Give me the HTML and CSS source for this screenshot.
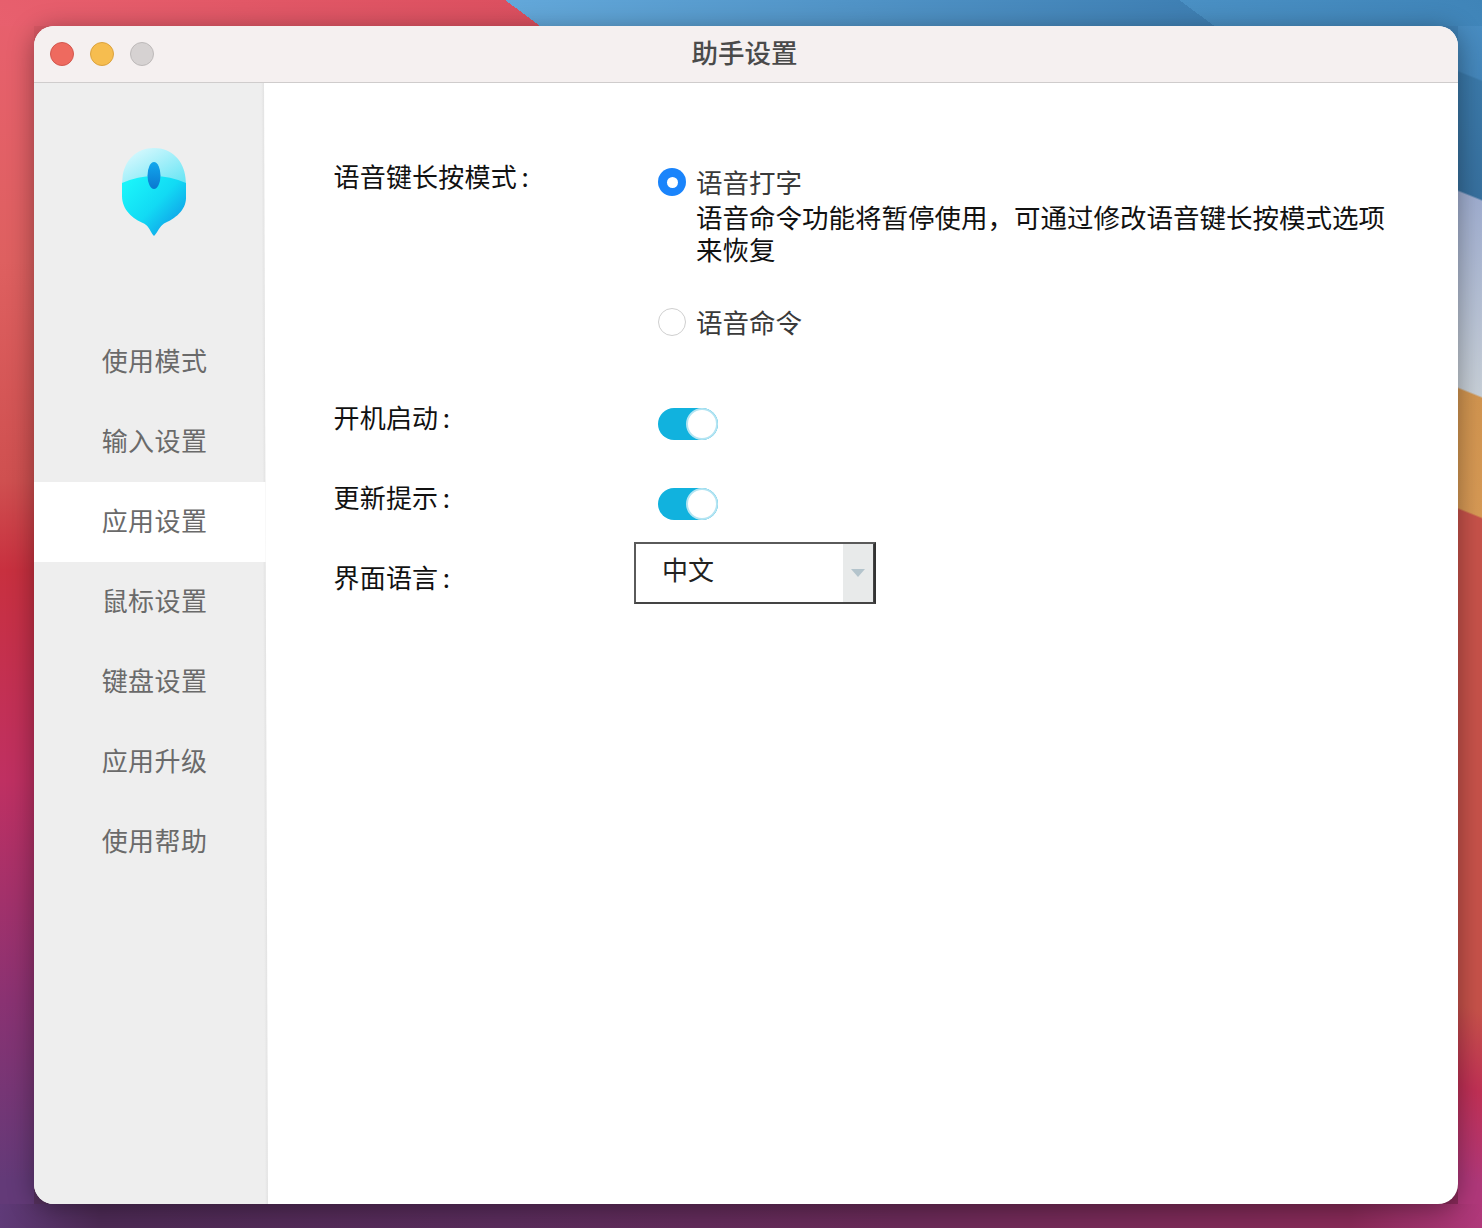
FILE: index.html
```html
<!DOCTYPE html>
<html lang="zh-CN">
<head>
<meta charset="utf-8">
<title>助手设置</title>
<link rel="stylesheet" href="styles.css">
</head>
<body>
<div class="window">
  <header class="titlebar">
    <div class="lights">
      <span class="light light-close"></span>
      <span class="light light-min"></span>
      <span class="light light-max"></span>
    </div>
    <div class="title">助手设置</div>
  </header>
  <div class="content">
    <aside class="sidebar">
      <div class="logo">
        <svg width="64" height="88" viewBox="0 0 64 88">
          <defs>
            <linearGradient id="top" x1="0" y1="0" x2="1" y2="1">
              <stop offset="0" stop-color="#e6fbff"/>
              <stop offset="1" stop-color="#62e4f4"/>
            </linearGradient>
            <linearGradient id="body" x1="0.1" y1="0.1" x2="0.95" y2="0.85">
              <stop offset="0" stop-color="#1af4fa"/>
              <stop offset="0.5" stop-color="#12daf4"/>
              <stop offset="1" stop-color="#0f98e6"/>
            </linearGradient>
            <linearGradient id="wheel" x1="0" y1="0" x2="0" y2="1">
              <stop offset="0" stop-color="#12a8ee"/>
              <stop offset="1" stop-color="#0a78d0"/>
            </linearGradient>
          </defs>
          <path fill="url(#top)" d="M32 0C50 0 62 13 63.500 30L64 36L32 30L0 36L.5 30C2 13 14 0 32 0Z"/>
          <path fill="url(#body)" d="M0 35Q16 28 32 28Q48 28 64 35V50C64 62 53 71 42 75.500C38 78 35 85 32 88C29 85 27 78 22 75.500C11 71 0 62 0 48Z"/>
          <ellipse cx="32" cy="27.500" rx="6.500" ry="13.500" fill="url(#wheel)"/>
        </svg>
      </div>
      <nav class="menu">
        <div class="menu-item">使用模式</div>
        <div class="menu-item">输入设置</div>
        <div class="menu-item menu-item-active">应用设置</div>
        <div class="menu-item">鼠标设置</div>
        <div class="menu-item">键盘设置</div>
        <div class="menu-item">应用升级</div>
        <div class="menu-item">使用帮助</div>
      </nav>
    </aside>
    <main class="main">
      <section class="row row-voice">
        <div class="label">语音键长按模式<span class="colon">:</span></div>
        <div class="options">
          <div class="option">
            <span class="radio radio-on"></span>
            <div class="option-text">
              <div class="option-name">语音打字</div>
              <div class="option-desc">语音命令功能将暂停使用&#xFF0C;可通过修改语音键长按模式选项来恢复</div>
            </div>
          </div>
          <div class="option option-second">
            <span class="radio"></span>
            <div class="option-text">
              <div class="option-name">语音命令</div>
            </div>
          </div>
        </div>
      </section>
      <section class="row row-toggle">
        <div class="label">开机启动<span class="colon">:</span></div>
        <div class="toggle"><span class="knob"></span></div>
      </section>
      <section class="row row-toggle">
        <div class="label">更新提示<span class="colon">:</span></div>
        <div class="toggle"><span class="knob"></span></div>
      </section>
      <section class="row row-select">
        <div class="label">界面语言<span class="colon">:</span></div>
        <div class="select">
          <div class="select-value">中文</div>
          <div class="select-btn"><span class="arrow"></span></div>
        </div>
      </section>
    </main>
  </div>
</div>
</body>
</html>
```
FILE: styles.css
```css
* { box-sizing: border-box; }
html, body { margin: 0; height: 100%; }
body {
  height: 1228px;
  overflow: hidden;
  padding: 26px 24px 24px 34px;
  font-family: "Noto Sans CJK SC", "Noto Sans", sans-serif;
  background-color: #c04a55;
  background-image:
    linear-gradient(#dc5a66, #dc5a66),
    linear-gradient(#3f80b4, #3f80b4),
    linear-gradient(#57325f, #57325f),
    linear-gradient(#8a2a5a, #8a2a5a),
    linear-gradient(36.6deg, #e8606e 0, #dc5060 322px, #63a8da 322px, #3f80b4 724px, #4a90c4 724px, #3f84b8 904px),
    linear-gradient(90deg, #5f3a78 0, #4d2a55 100px, #5a2c5c 500px, #6a2a58 900px, #882a58 1350px, #b0387a 100%),
    linear-gradient(180deg, #e8606e 0, #de6060 260px, #cf5050 480px, #c8303f 570px, #bf3062 780px, #8a3272 1000px, #633a78 1180px),
    linear-gradient(201.8deg, #4a8fc4 0, #4486ba 74px, #3a78a8 76px, #37709e 185px, #a0aed0 187px, #c8d0d8 368px, #d29550 370px, #d89a55 480px, #c7524a 482px, #c7524a 939px, #c03055 1015px, #b0387a 1100px);
  background-size: 20px 20px, 20px 20px, 20px 20px, 20px 20px, 100% 26px, 100% 24px, 34px 100%, 24px 100%;
  background-position: 34px 26px, 1438px 26px, 34px 1184px, 1438px 1184px, 0 0, 0 100%, 0 0, 100% 0;
  background-repeat: no-repeat;
}
.window {
  height: 1178px;
  display: flex;
  flex-direction: column;
  background: #fff;
  border-radius: 20px;
  overflow: hidden;
  box-shadow: 0 4px 26px rgba(0, 0, 0, .38);
}
.titlebar {
  flex: 0 0 57px;
  display: flex;
  align-items: center;
  background: #f5f0f0;
  border-bottom: 1px solid #cfcccc;
  position: relative;
}
.lights {
  display: flex;
  gap: 16px;
  padding-left: 16px;
}
.light {
  width: 24px;
  height: 24px;
  border-radius: 50%;
  border: 1px solid;
}
.light-close { background: #ee6a5f; border-color: #d2574e; }
.light-min { background: #f6bd4f; border-color: #dba23e; }
.light-max { background: #d6d2d2; border-color: #bdb9b9; }
.title {
  position: absolute;
  left: 0;
  right: 0;
  top: 8px;
  text-align: center;
  padding-right: 3px;
  font-size: 26.500px;
  font-weight: 500;
  line-height: 36px;
  color: #4a4a4a;
}
.content {
  flex: 1;
  display: flex;
  min-height: 0;
}
.sidebar {
  flex: 0 0 234px;
  min-width: 0;
  background: linear-gradient(89.8deg, #eeeeee 231px, #e2e2e2 234px);
  clip-path: polygon(0 0, 230px 0, 234px 100%, 0 100%);
}
.logo {
  height: 239px;
  padding: 65px 0 0 88px;
}
.logo svg { display: block; }
.menu-item {
  height: 80px;
  width: 241px;
  padding-bottom: 6px;
  display: flex;
  align-items: center;
  justify-content: center;
  font-size: 26px;
  color: #6a6a6a;
  letter-spacing: .4px;
}
.menu-item-active { background: #fff; }
.main {
  flex: 1;
  padding: 75px 0 0 65.500px;
}
.row {
  display: grid;
  grid-template-columns: 324.500px 1fr;
}
.label {
  font-size: 26px;
  line-height: 36px;
  letter-spacing: .2px;
  color: #111;
}
.colon { margin-left: 4.500px; }
.options { width: 730px; }
.row-voice { height: 241px; }
.option {
  display: flex;
  gap: 10px;
  padding-top: 8px;
}
.option-second { padding-top: 41px; }
.radio {
  flex: 0 0 28px;
  width: 28px;
  height: 28px;
  margin-top: 2px;
  border-radius: 50%;
  background: #fff;
  border: 1px solid #cfcfcf;
}
.radio-on {
  background: #1a84fb;
  border: 0;
  display: flex;
  align-items: center;
  justify-content: center;
}
.radio-on::after {
  content: "";
  width: 11px;
  height: 11px;
  border-radius: 50%;
  background: #fff;
}
.option-text { flex: 1; }
.option-name {
  font-size: 26.500px;
  line-height: 32px;
  color: #3a3a3a;
  margin-bottom: 3px;
}
.option-desc {
  font-size: 26.500px;
  line-height: 32px;
  color: #111;
}
.row-toggle { height: 80px; }
.toggle {
  width: 60px;
  height: 32px;
  margin-top: 9px;
  background: #11b2de;
  border-radius: 16px;
  display: flex;
  justify-content: flex-end;
  align-items: center;
}
.knob {
  width: 32px;
  height: 32px;
  border-radius: 50%;
  background: #fff;
  border: 2px solid #b4e4f2;
}
.select {
  width: 242px;
  height: 62px;
  margin: -17px 0 0 -24px;
  display: flex;
  background: #fff;
  border: 2px solid #5a5a5a;
  border-right-color: #333;
  border-bottom-color: #444;
}
.select-value {
  flex: 1;
  padding-left: 26px;
  font-size: 26px;
  line-height: 50px;
  color: #222;
}
.select-btn {
  flex: 0 0 31px;
  background: #e8eaea;
  display: flex;
  align-items: center;
  justify-content: center;
  border-right: 1px solid #444;
}
.arrow {
  width: 0;
  height: 0;
  border-left: 7px solid transparent;
  border-right: 7px solid transparent;
  border-top: 8px solid #b4c4cc;
}
```
